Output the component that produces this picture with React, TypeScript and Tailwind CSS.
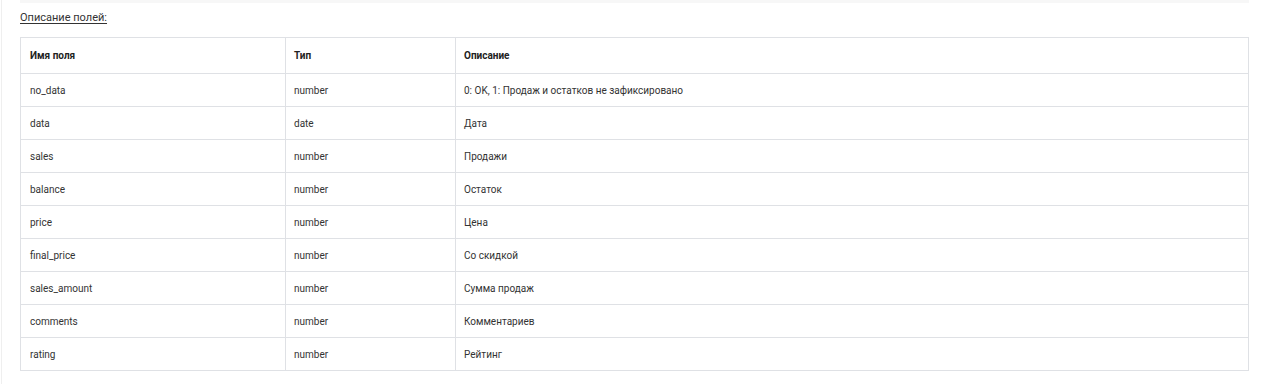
import React from "react";

const rows: [string, string, string][] = [
  ["no_data", "number", "0: OK, 1: Продаж и остатков не зафиксировано"],
  ["data", "date", "Дата"],
  ["sales", "number", "Продажи"],
  ["balance", "number", "Остаток"],
  ["price", "number", "Цена"],
  ["final_price", "number", "Со скидкой"],
  ["sales_amount", "number", "Сумма продаж"],
  ["comments", "number", "Комментариев"],
  ["rating", "number", "Рейтинг"],
];

export default function App() {
  return (
    <div
      className="w-[1278px] h-[384px] bg-white overflow-hidden"
      style={{ fontFamily: "Roboto, 'Liberation Sans', sans-serif" }}
    >
      <div className="ml-px h-full border-l border-[#efefef] pl-[18px]">
        <div className="w-[1229px] h-[3px] bg-[#f7f7f7]" />
        <div className="pt-[8px] h-[34px]">
          <a className="block text-[11px] leading-[13px] text-[#333] underline underline-offset-2 cursor-pointer">
            Описание полей:
          </a>
        </div>
        <table className="w-[1229px] border-collapse table-fixed text-[10px] text-[#333]">
          <colgroup>
            <col className="w-[265px]" />
            <col className="w-[170px]" />
            <col />
          </colgroup>
          <thead>
            <tr className="h-[36px]">
              <th className="border border-[#dfe1e5] px-[9px] text-left font-bold text-[#222]">Имя поля</th>
              <th className="border border-[#dfe1e5] px-[8px] text-left font-bold text-[#222]">Тип</th>
              <th className="border border-[#dfe1e5] px-[8px] text-left font-bold text-[#222]">Описание</th>
            </tr>
          </thead>
          <tbody>
            {rows.map(([a, b, c]) => (
              <tr key={a} className="h-[33px]">
                <td className="border border-[#dfe1e5] px-[9px]">{a}</td>
                <td className="border border-[#dfe1e5] px-[8px]">{b}</td>
                <td className="border border-[#dfe1e5] px-[8px]">{c}</td>
              </tr>
            ))}
          </tbody>
        </table>
      </div>
    </div>
  );
}
